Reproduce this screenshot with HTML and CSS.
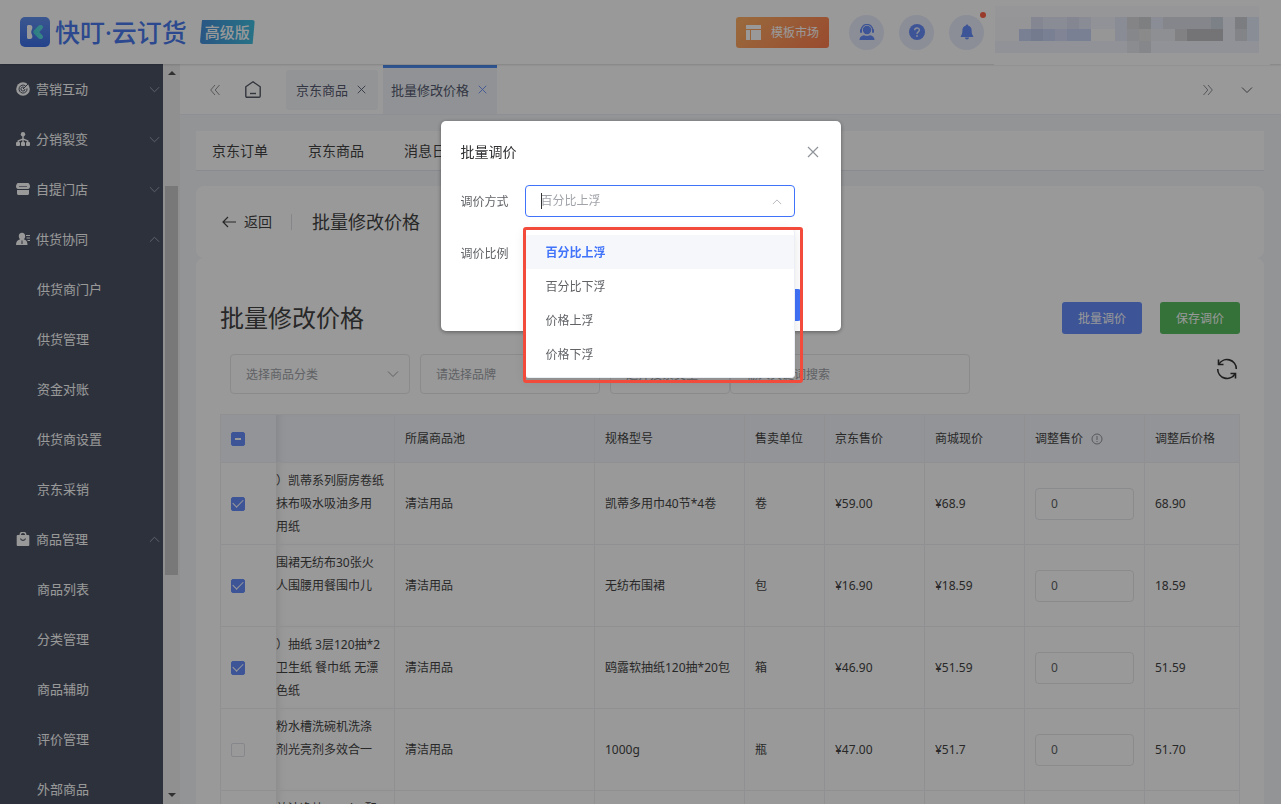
FILE: index.html
```html
<!DOCTYPE html>
<html lang="zh-CN">
<head>
<meta charset="utf-8" />
<meta name="viewport" content="width=device-width, initial-scale=1" />
<title>批量修改价格</title>
<link rel="stylesheet" href="styles.css">
</head>
<body>
<svg class="sprite" aria-hidden="true">
  <symbol id="down" viewBox="0 0 12 12"><path d="M1 3.500l5 5 5-5" fill="none" stroke="currentColor"/></symbol>
  <symbol id="up" viewBox="0 0 12 12"><path d="M1 8.500l5-5 5 5" fill="none" stroke="currentColor"/></symbol>
  <symbol id="close" viewBox="0 0 12 12"><path d="M1 1l10 10M11 1L1 11" fill="none" stroke="currentColor" stroke-width="1.200"/></symbol>
</svg>

<header class="topbar">
  <a class="brand" href="#">
    <svg width="30" height="30" viewBox="0 0 30 30">
      <defs>
        <linearGradient id="lg" x1="0" y1="0" x2="0" y2="1"><stop offset="0" stop-color="#6391f0"/><stop offset="1" stop-color="#3d70e8"/></linearGradient>
        <linearGradient id="tl" x1="0" y1="0" x2="1" y2="0"><stop offset="0" stop-color="#4bd0dc"/><stop offset="1" stop-color="#5de0e0"/></linearGradient>
      </defs>
      <rect width="30" height="30" rx="5" fill="url(#lg)"/>
      <path d="M8.500 8h1.500c1.600 0 2.400 1 2.400 2.400 0 1.800-1.200 2.800-1.200 4.600s1.200 2.800 1.200 4.600c0 1.400-.8 2.400-2.400 2.400H8.500C7.700 22 7 21.300 7 20.500v-11C7 8.700 7.700 8 8.500 8z" fill="#fff"/>
      <path d="M20.500 8c2.300 0 3.200 2.300 1.800 3.800L19.200 15l3.100 3.200c1.400 1.500.5 3.800-1.800 3.800-1 0-1.600-.4-2.300-1.100l-4.200-4.200c-1-1-1-2.400 0-3.400l4.200-4.200C18.900 8.400 19.500 8 20.500 8z" fill="url(#tl)"/>
    </svg>
    <span class="brand-name">快叮·云订货</span>
    <span class="edition">高级版</span>
  </a>
  <div class="tools">
    <button class="market">
      <svg width="15" height="15" viewBox="0 0 15 15" fill="#fff"><path d="M0 0h15v4H0zM0 5h4v10H0zM5 5h10v10H5z"/></svg>
      模板市场
    </button>
    <button class="round" aria-label="客服">
      <svg width="16" height="16" viewBox="0 0 16 16" fill="currentColor"><circle cx="8" cy="6" r="4.200"/><path d="M2.400 6a5.600 5.600 0 0 1 11.200 0" fill="none" stroke="currentColor" stroke-width="1.200"/><rect x="1" y="5" width="2" height="4" rx="1"/><rect x="13" y="5" width="2" height="4" rx="1"/><path d="M.5 16c0-3 1.800-4.500 4.500-4.800 1.800 1 4.200 1 6 0 2.700.3 4.500 1.800 4.500 4.800z"/></svg>
    </button>
    <button class="round" aria-label="帮助">
      <svg width="16" height="16" viewBox="0 0 16 16"><circle cx="8" cy="8" r="8" fill="currentColor"/><path d="M5.700 6.300c0-3 4.700-3 4.700-.2C10.400 7.900 8 7.900 8 9.900" fill="none" stroke="#e6ecff" stroke-width="1.400"/><circle cx="8" cy="12" r=".9" fill="#e6ecff"/></svg>
    </button>
    <button class="round" aria-label="通知">
      <svg width="16" height="16" viewBox="0 0 16 16" fill="currentColor"><path d="M8 .5c.7 0 1.100.5 1.100 1.100 2.200.6 3.500 2.300 3.500 4.700 0 3 .5 4.800 1.600 5.700v.9H1.800V12c1.100-.9 1.600-2.700 1.600-5.700 0-2.400 1.300-4.100 3.500-4.700C6.900 1 7.300.5 8 .5zM6 13.600h4c0 1.200-.9 2-2 2s-2-.8-2-2z"/></svg>
      <i class="dot"></i>
    </button>
    <svg class="account" width="276" height="65" viewBox="0 0 276 65" shape-rendering="crispEdges">
      <rect width="276" height="65" fill="#fff"/>
      <rect x="1" y="6" width="264" height="11" fill="#fbfbff"/>
      <rect x="1" y="17" width="264" height="36" fill="#f2f4fc"/>
      <rect x="1" y="17" width="36" height="24" fill="#f8f9fd"/>
      <g fill="#dce1f3"><rect x="37" y="17" width="12" height="12"/><rect x="73" y="17" width="12" height="12"/></g>
      <g fill="#e7eaf8"><rect x="49" y="17" width="24" height="12"/><rect x="85" y="17" width="12" height="12"/><rect x="121" y="17" width="12" height="24"/></g>
      <rect x="25" y="29" width="72" height="12" fill="#ccd5f5"/>
      <rect x="37" y="29" width="12" height="12" fill="#c3cdee"/>
      <rect x="61" y="29" width="12" height="12" fill="#d5dcf8"/>
      <rect x="97" y="29" width="24" height="12" fill="#fbfbfb"/>
      <rect x="133" y="17" width="12" height="12" fill="#dcdde1"/>
      <rect x="145" y="17" width="12" height="12" fill="#d3d4d7"/>
      <rect x="157" y="17" width="12" height="12" fill="#e7ecf8"/>
      <rect x="169" y="17" width="60" height="12" fill="#dce0ea"/>
      <rect x="217" y="17" width="12" height="12" fill="#cfd5e2"/>
      <rect x="133" y="29" width="12" height="12" fill="#e0e2e6"/>
      <rect x="145" y="29" width="12" height="12" fill="#e7e7e6"/>
      <rect x="157" y="29" width="24" height="12" fill="#ebeef6"/>
      <rect x="181" y="29" width="12" height="12" fill="#d7d8dc"/>
      <rect x="193" y="29" width="36" height="12" fill="#c1c2c7"/>
      <rect x="133" y="41" width="12" height="12" fill="#e8eaf0"/>
      <rect x="145" y="41" width="12" height="12" fill="#dfe1e6"/>
      <rect x="241" y="17" width="12" height="12" fill="#ced1d8"/>
      <rect x="241" y="29" width="12" height="12" fill="#dadde3"/>
      <rect x="253" y="17" width="12" height="24" fill="#e5edfb"/>
    </svg>
  </div>
</header>

<div class="layout">
  <nav class="side">
    <ul class="menu">
      <li><a href="#"><svg class="ico" viewBox="0 0 14 14"><circle cx="7" cy="7" r="6.800" fill="currentColor"/><path d="M9.500 3.900A4 4 0 1 0 11 6.500M8 5.300A2 2 0 1 0 9 7" fill="none" stroke="#4c5365"/><path d="M7 7l6-6" stroke="#4c5365"/></svg>营销互动<svg class="arr"><use href="#down"/></svg></a></li>
      <li><a href="#"><svg class="ico" viewBox="0 0 14 14" fill="currentColor"><circle cx="7" cy="2.200" r="2.200"/><path d="M6.300 3h1.400v3.500l4.800 2V11h-1.400V9.500L7.700 8v3H6.300V8L2.900 9.500V11H1.500V8.500l4.800-2z"/><rect y="10" width="4" height="4" rx="1"/><rect x="5" y="10" width="4" height="4" rx="1"/><rect x="10" y="10" width="4" height="4" rx="1"/></svg>分销裂变<svg class="arr"><use href="#down"/></svg></a></li>
      <li><a href="#"><svg class="ico" viewBox="0 0 14 14" fill="currentColor"><path d="M2 1h10c1 0 2 2 2 3.500S13 7 12 7H2C1 7 0 6 0 4.500S1 1 2 1zM1 8h12v3.500c0 .8-.7 1.500-1.500 1.500h-9C1.700 13 1 12.300 1 11.500z"/><path d="M3 4.500h8" stroke="#8d92a0"/></svg>自提门店<svg class="arr"><use href="#down"/></svg></a></li>
      <li><a href="#"><svg class="ico" viewBox="0 0 14 14" fill="currentColor"><path d="M6 .8c2 0 3.200 1.300 3.200 3.200 0 1.500-.6 2.600-1.400 3.300 2.500.7 3.700 2.200 3.700 5.700H0c0-3.500 1.500-5 4.200-5.700C3.400 6.600 2.800 5.500 2.800 4 2.800 2.100 4 .8 6 .8z"/><path d="M10 3.500h4M10.500 6h3.500M11.500 8.500H14" stroke="currentColor" stroke-width="1.200"/><path d="M6 8.500v3.500" stroke="#4c5365"/></svg>供货协同<svg class="arr"><use href="#up"/></svg></a>
        <ul>
          <li><a href="#">供货商门户</a></li>
          <li><a href="#">供货管理</a></li>
          <li><a href="#">资金对账</a></li>
          <li><a href="#">供货商设置</a></li>
          <li><a href="#">京东采销</a></li>
        </ul>
      </li>
      <li><a href="#"><svg class="ico" viewBox="0 0 14 14"><path d="M4.200 4V3a2.800 2.800 0 0 1 5.600 0v1" fill="none" stroke="currentColor" stroke-width="1.400"/><rect x=".7" y="3" width="12.600" height="11" rx="1" fill="currentColor"/><path d="M4.500 6.500c.5 2.500 4.500 2.500 5 0" fill="none" stroke="#4c5365" stroke-width="1.200"/></svg>商品管理<svg class="arr"><use href="#up"/></svg></a>
        <ul>
          <li><a href="#">商品列表</a></li>
          <li><a href="#">分类管理</a></li>
          <li><a href="#">商品辅助</a></li>
          <li><a href="#">评价管理</a></li>
          <li><a href="#">外部商品</a></li>
        </ul>
      </li>
    </ul>
    <div class="scroll">
      <svg width="8" height="4" viewBox="0 0 8 4"><path d="M0 4l4-4 4 4z" fill="#505050"/></svg>
      <div class="thumb"></div>
      <svg width="8" height="4" viewBox="0 0 8 4"><path d="M0 0l4 4 4-4z" fill="#505050"/></svg>
    </div>
  </nav>

  <main class="main">
    <div class="tabs">
      <button class="plain" aria-label="向左"><svg width="10" height="12" viewBox="0 0 10 12"><path d="M5 1L.7 6 5 11M9.500 1L5.200 6l4.300 5" fill="none" stroke="#909399"/></svg></button>
      <a class="home" href="#" aria-label="首页"><svg width="16" height="17" viewBox="0 0 16 17"><path d="M.8 5.800L8 .8l7.200 5V15c0 .8-.4 1.200-1.200 1.200H2c-.8 0-1.200-.4-1.200-1.200z" fill="none" stroke="#555a66" stroke-width="1.400" stroke-linejoin="round"/><path d="M5 12.500h6" stroke="#555a66" stroke-width="1.400"/></svg></a>
      <a class="tab" href="#">京东商品<svg class="x"><use href="#close"/></svg></a>
      <a class="tab active" href="#">批量修改价格<svg class="x"><use href="#close"/></svg></a>
      <div class="tabs-end">
        <button class="plain" aria-label="向右"><svg width="10" height="12" viewBox="0 0 10 12"><path d="M.5 1l4.300 5L.5 11M5 1l4.300 5L5 11" fill="none" stroke="#909399"/></svg></button>
        <button class="plain" aria-label="更多"><svg width="12" height="12"><use href="#down"/></svg></button>
      </div>
    </div>

    <div class="content">
      <nav class="subnav"><a href="#">京东订单</a><a href="#">京东商品</a><a href="#">消息日志</a></nav>

      <div class="card page-head">
        <a class="back" href="#"><svg width="14" height="12" viewBox="0 0 14 12"><path d="M6 1L1 6l5 5M1 6h13" fill="none" stroke="#444" stroke-width="1.200"/></svg>返回</a>
        <h1>批量修改价格</h1>
      </div>

      <section class="card panel">
        <div class="panel-head">
          <h2>批量修改价格</h2>
          <button class="btn primary-light">批量调价</button>
          <button class="btn green">保存调价</button>
        </div>
        <div class="filters">
          <label class="pick"><select aria-label="商品分类"><option>选择商品分类</option></select><svg class="arr"><use href="#down"/></svg></label>
          <label class="pick"><select aria-label="品牌"><option>请选择品牌</option></select><svg class="arr"><use href="#down"/></svg></label>
          <div class="search">
            <label class="pick"><select aria-label="搜索类型"><option>选择搜索类型</option></select></label>
            <input type="text" aria-label="关键词" placeholder="输入关键词搜索">
          </div>
          <button class="plain refresh" aria-label="刷新"><svg width="22" height="22" viewBox="0 0 22 22" fill="none" stroke="#333" stroke-width="1.600"><path d="M2.800 6.500A9.300 9.300 0 0 1 20.300 11M1.700 11a9.300 9.300 0 0 0 17.500 4.500"/><path d="M2.500 1.500v5h5M19.500 20.500v-5h-5"/></svg></button>
        </div>

        <table class="grid">
          <colgroup><col class="w56"><col class="w119"><col class="w200"><col class="w150"><col class="w80"><col class="w100"><col class="w100"><col class="w120"><col></colgroup>
          <thead>
            <tr>
              <th><input type="checkbox" class="some" aria-label="全选"></th><th class="name"></th><th>所属商品池</th><th>规格型号</th><th>售卖单位</th><th>京东售价</th><th>商城现价</th>
              <th>调整售价<svg class="info" viewBox="0 0 12 12" fill="none" stroke="#909399"><circle cx="6" cy="6" r="5"/><path d="M6 3v4M6 8v1"/></svg></th><th>调整后价格</th>
            </tr>
          </thead>
          <tbody>
            <tr>
              <td><input type="checkbox" checked aria-label="选择"></td>
              <td class="name"><p>装）凯蒂系列厨房卷纸<br>人抹布吸水吸油多用<br>费用纸</p></td>
              <td>清洁用品</td><td>凯蒂多用巾40节*4卷</td><td>卷</td><td>¥59.00</td><td>¥68.9</td>
              <td><input type="text" value="0" aria-label="调整售价"></td><td>68.90</td>
            </tr>
            <tr>
              <td><input type="checkbox" checked aria-label="选择"></td>
              <td class="name"><p>性围裙无纺布30张火<br>成人围腰用餐围巾儿</p></td>
              <td>清洁用品</td><td>无纺布围裙</td><td>包</td><td>¥16.90</td><td>¥18.59</td>
              <td><input type="text" value="0" aria-label="调整售价"></td><td>18.59</td>
            </tr>
            <tr>
              <td><input type="checkbox" checked aria-label="选择"></td>
              <td class="name"><p>装）抽纸 3层120抽*2<br>包卫生纸 餐巾纸 无漂<br>本色纸</p></td>
              <td>清洁用品</td><td>鸥露软抽纸120抽*20包</td><td>箱</td><td>¥46.90</td><td>¥51.59</td>
              <td><input type="text" value="0" aria-label="调整售价"></td><td>51.59</td>
            </tr>
            <tr>
              <td><input type="checkbox" aria-label="选择"></td>
              <td class="name"><p>碗粉水槽洗碗机洗涤<br>洁剂光亮剂多效合一</p></td>
              <td>清洁用品</td><td>1000g</td><td>瓶</td><td>¥47.00</td><td>¥51.7</td>
              <td><input type="text" value="0" aria-label="调整售价"></td><td>51.70</td>
            </tr>
            <tr>
              <td><input type="checkbox" aria-label="选择"></td>
              <td class="name"><p>全效洁净块 10g*2 配</p></td>
              <td>清洁用品</td><td></td><td></td><td></td><td></td>
              <td></td><td></td>
            </tr>
          </tbody>
        </table>
      </section>
    </div>
  </main>
</div>

<div class="mask">
  <form class="dialog" role="dialog" aria-labelledby="dlg-title">
    <div class="dialog-head">
      <h3 id="dlg-title">批量调价</h3>
      <button type="button" class="plain" aria-label="关闭"><svg width="12" height="12"><use href="#close"/></svg></button>
    </div>
    <div class="field">
      <label for="mode">调价方式</label>
      <div class="combo">
        <input id="mode" type="text" role="combobox" aria-expanded="true" aria-controls="modes" placeholder="百分比上浮">
        <i class="caret"></i>
        <svg class="arr"><use href="#up"/></svg>
        <ul class="options" id="modes" role="listbox">
          <li role="option" aria-selected="true">百分比上浮</li>
          <li role="option">百分比下浮</li>
          <li role="option">价格上浮</li>
          <li role="option">价格下浮</li>
        </ul>
        <div class="highlight"></div>
      </div>
    </div>
    <div class="field">
      <label for="ratio">调价比例</label>
      <input id="ratio" type="text">
    </div>
    <div class="dialog-foot"><button type="button" class="btn primary">确定</button></div>
  </form>
</div>
</body>
</html>
```

FILE: styles.css
```css
* {box-sizing: border-box;}
html {font-family: "Noto Sans", "Noto Sans CJK SC", sans-serif; font-size: 12px;}
body {margin: 0; height: 100vh; overflow: hidden; display: flex; flex-direction: column; color: #444;}
ul {list-style: none; margin: 0; padding: 0;}
h1, h2, h3, p {margin: 0; font-weight: normal;}
a {color: inherit; text-decoration: none;}
button, input, select {font: inherit; color: inherit;}
button {border: 0; cursor: pointer;}
svg {display: block; flex: none;}
.sprite {position: absolute; width: 0; height: 0;}
.arr {width: 12px; height: 12px;}
.plain {background: none; padding: 0;}

/* top bar */
.topbar {display: flex; justify-content: space-between; align-items: center; height: 64px; flex: none; padding: 0 11px 0 20px; background: #fff; box-shadow: 0 1px 2px rgba(0, 0, 0, .15); z-index: 1;}
.brand {display: flex; align-items: center;}
.brand-name {margin: 0 13px 0 5px; font-size: 25px; line-height: 30px; font-weight: 500; color: #4a7bee;}
.edition {padding: 0 5px; font-size: 15px; line-height: 24px; font-weight: 500; color: #fff; background: linear-gradient(90deg, #4590dc, #42bfe0); border-radius: 3px; clip-path: polygon(4% 0, 100% 0, 96% 100%, 0 100%);}
.tools {display: flex; align-items: center;}
.market {display: flex; align-items: center; gap: 10px; height: 31px; margin-right: 20px; padding: 0 10px; border-radius: 3px; color: #fff; background: linear-gradient(135deg, #ffb266, #ff7d4f);}
.round {position: relative; display: grid; place-items: center; width: 35px; height: 35px; margin-right: 15px; padding: 0; border-radius: 50%; background: #e8edfc; color: #668cfa;}
.round:nth-of-type(4) {margin-right: 10px;}
.dot {position: absolute; top: -3px; right: -2px; width: 6px; height: 6px; border-radius: 50%; background: #ff6347;}

.layout {display: flex; flex: 1; min-height: 0;}

/* side menu */
.side {display: flex; flex: none; width: 180px; overflow: hidden;}
.menu {flex: 1; overflow: hidden; background: #4c5365; color: #fff; font-size: 13px;}
.menu a {display: flex; align-items: center; height: 50px; padding: 0 3px 0 16px; line-height: 18px; white-space: nowrap;}
.menu .ico {width: 14px; height: 14px; margin-right: 6px;}
.menu .arr {width: 11px; height: 11px; margin-left: auto; color: #a4a8b3;}
.menu ul a {padding-left: 37px;}
.scroll {display: flex; flex-direction: column; align-items: center; flex: none; width: 17px; padding: 7px 0 7px; background: #f1f1f1;}
.thumb {width: 13px; height: 389px; margin: 111px 0 auto; background: #c8c8c8;}

/* tabs */
.main {display: flex; flex-direction: column; flex: 1; min-width: 0; background: #f5f7fa;}
.tabs {display: flex; align-items: center; flex: none; height: 51px; padding: 1px 28px 0 30px; background: #fff; border-bottom: 1px solid #ebeef5;}
.home {margin: 0 25px;}
.tab {display: flex; align-items: center; gap: 9px; height: 40px; padding: 0 12px 0 10px; border-radius: 3px; background: #f5f7fa; font-size: 13px; line-height: 18px; color: #555a70;}
.tab .x {width: 9px; height: 9px;}
.tab.active {height: 49px; margin-left: 5px; padding: 0 10px 3px 8px; border-top: 3px solid #4d8cf0; border-radius: 0; background: #f0f3f8;}
.tab.active .x {color: #668cfa;}
.tabs-end {display: flex; gap: 28px; margin-left: auto; color: #606266;}

/* content */
.content {flex: 1; min-height: 0; padding: 16px 17px 0 16px; overflow: hidden;}
.subnav {display: flex; align-items: center; gap: 40px; height: 40px; margin-bottom: 15px; padding: 0 16px; font-size: 14px; line-height: 18px; background: #fff; border-bottom: 1px solid #e4e7ed;}
.card {background: #fff; border-radius: 8px;}
.page-head {display: flex; align-items: center; height: 72px; padding: 0 26px;}
.back {display: flex; align-items: center; gap: 8px; font-size: 14px; line-height: 16px; padding-right: 19px; margin-right: 20px; border-right: 1px solid #dcdfe6;}
h1 {font-size: 18px; line-height: 26px;}
.panel {padding: 40px 24px 0; min-height: 600px;}
.panel-head {display: flex; align-items: center; gap: 18px; height: 40px; margin-bottom: 16px;}
h2 {flex: 1; font-size: 24px; line-height: 40px;}
.btn {height: 32px; padding: 0 16px; border-radius: 3px; color: #fff;}
.primary-light {background: #668cfa;}
.primary {background: #4073fa;}
.green {background: #57be61;}
.filters {display: flex; align-items: center; gap: 10px; height: 40px; margin-bottom: 20px; padding: 0 2px 0 10px; color: #a0a3a9;}
.pick {position: relative; width: 180px;}
.pick select, .search input {appearance: none; width: 100%; height: 40px; padding: 0 15px; border: 1px solid #e6e8ec; border-radius: 4px; background: #fff; outline: 0;}
.pick .arr {position: absolute; top: 14px; right: 11px; pointer-events: none;}
.search {display: flex; width: 360px;}
.search .pick {width: 120px; flex: none;}
.search input {flex: 1; min-width: 0;}
::placeholder {color: #a0a3a9; opacity: 1;}
.refresh {margin: 0 0 10px auto;}

/* price table */
.grid {width: 100%; table-layout: fixed; border-spacing: 0; border-top: 1px solid #f0f1f4;}
.w56 {width: 56px;}
.w80 {width: 80px;}
.w100 {width: 100px;}
.w119 {width: 119px;}
.w120 {width: 120px;}
.w150 {width: 150px;}
.w200 {width: 200px;}
.grid th, .grid td {padding: 6px 10px; border: solid #f0f1f4; border-width: 0 1px 1px 0; line-height: 23px; text-align: left; font-weight: normal; white-space: nowrap;}
.grid th {height: 48px; background: #f5f7fc;}
.grid td {height: 82px;}
.grid tr > :first-child {border-left-width: 1px; border-right: 0;}
.grid .name {padding: 6px 0; overflow: hidden; box-shadow: inset 8px 0 8px -6px rgba(0, 0, 0, .1);}
.name p {height: 69px; margin-left: -12px;}
.grid input[type=text] {display: block; width: 100%; height: 32px; padding: 0 15px; border: 1px solid #e6e8ec; border-radius: 4px; color: #606266; background: #fff;}
.grid input[type=checkbox] {appearance: none; display: grid; place-items: center; width: 14px; height: 14px; margin: 0; border: 1px solid #e0e2e8; border-radius: 2px; background: #fff;}
.grid input:checked, .grid input.some {border-color: #668cfa; background: #668cfa;}
.grid input:checked::after {content: ""; width: 9px; height: 5px; margin-bottom: 3px; border: solid #fff; border-width: 0 0 1px 1px; rotate: -45deg;}
.grid input.some::after {content: ""; width: 6px; height: 2px; background: #fff;}
.info {display: inline-block; width: 12px; height: 12px; margin-left: 8px; vertical-align: -2px;}

/* dialog */
.mask {position: fixed; z-index: 2; inset: 0; display: flex; justify-content: center; align-items: flex-start; padding-top: 15vh; background: rgba(0, 0, 0, .4);}
.dialog {width: 400px; padding: 20px 20px 10px; border-radius: 5px; background: #fff; box-shadow: 0 1px 4px rgba(0, 0, 0, .4); color: #606266;}
.dialog-head {display: flex; justify-content: space-between; align-items: center; height: 22px; margin-bottom: 22px; padding-right: 2px; color: #909399;}
h3 {font-size: 14px; line-height: 18px; color: #303133;}
.field {display: flex; align-items: center; margin-bottom: 20px;}
.field label {width: 64px;}
.field input {display: block; width: 270px; height: 32px; padding: 0 15px; border: 1px solid #dcdfe6; border-radius: 4px; outline: 0;}
.combo {position: relative;}
.field .combo input {border-color: #4073fa;}
.combo .arr {position: absolute; top: 12px; right: 13px; width: 10px; height: 10px; color: #a8abb2;}
.caret {position: absolute; top: 8px; left: 16px; width: 1px; height: 16px; background: #333;}
.options {position: absolute; z-index: 1; top: 44px; left: 0; width: 270px; padding: 6px 0; border: 1px solid #ebeef5; border-top: 0; border-radius: 4px; background: #fff; box-shadow: 0 2px 12px rgba(0, 0, 0, .1);}
.options li {height: 34px; padding: 0 20px; line-height: 35px;}
.options [aria-selected] {background: #f5f7fa; color: #4073fa; font-weight: bold;}
.highlight {position: absolute; z-index: 2; top: 42px; left: -2px; width: 280px; height: 156px; border: 3px solid #f24b3c; border-radius: 3px; pointer-events: none;}
.dialog-foot {display: flex; justify-content: flex-end; padding-right: 20px;}
```
